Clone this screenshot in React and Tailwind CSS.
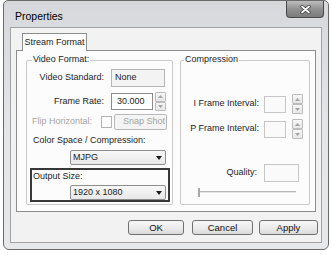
import React from "react";

function TriUp() {
  return (
    <svg width="5" height="3" viewBox="0 0 5 3">
      <path d="M0 3 L2.5 0 L5 3Z" fill="#a3a3a3" />
    </svg>
  );
}
function TriDown() {
  return (
    <svg width="5" height="3" viewBox="0 0 5 3">
      <path d="M0 0 L2.5 3 L5 0Z" fill="#a3a3a3" />
    </svg>
  );
}

function SpinHalf({ up }) {
  return (
    <div className="flex-1 flex items-center justify-center border border-[#bcbcbc] rounded-[1px] bg-gradient-to-b from-[#f7f7f7] to-[#e6e6e6]">
      {up ? <TriUp /> : <TriDown />}
    </div>
  );
}

function Spinner19() {
  return (
    <div className="w-[11px] h-[19px] flex flex-col">
      <SpinHalf up />
      <SpinHalf />
    </div>
  );
}
function Spinner20() {
  return (
    <div className="w-[11px] h-[20px] flex flex-col">
      <SpinHalf up />
      <SpinHalf />
    </div>
  );
}

function Combo({ text }) {
  return (
    <div className="w-[96px] h-[15px] flex items-center border border-[#8e8e8e] rounded-[2px] bg-gradient-to-b from-[#f8f8f8] to-[#e8e8e8] pl-[2px] pr-[3px]">
      <span className="leading-[11px]">{text}</span>
      <svg className="ml-auto" width="6" height="4" viewBox="0 0 6 4">
        <path d="M0 0 L6 0 L3 4Z" fill="#1a1a1a" />
      </svg>
    </div>
  );
}

function Btn({ children, w }) {
  return (
    <div
      className={
        "h-[15px] flex items-center justify-center rounded-[3px] border border-[#707070] bg-gradient-to-b from-[#f7f7f7] via-[#ececec] to-[#dadada] text-[9.5px] leading-[11px] text-[#111] " +
        w
      }
    >
      {children}
    </div>
  );
}

export default function App() {
  return (
    <div className="w-[332px] h-[255px] bg-white overflow-hidden font-['Liberation_Sans',Arial,sans-serif] text-[9px] text-[#1c1c1c]">
      <div className="ml-[3px] w-[326px] h-[250px] flex flex-col border border-[#6a6a6a] rounded-t-[5px] rounded-b-[6px] bg-gradient-to-b from-[#d6d8db] via-[#e3e5e7] to-[#e6e8ea]">
        {/* title bar */}
        <div className="h-[26px] shrink-0 flex items-start">
          <span className="ml-[11px] mt-[9px] text-[10.5px] leading-[12px] text-black">
            Properties
          </span>
          <div className="ml-auto mr-[4px] w-[38px] h-[17px] flex items-center justify-center rounded-b-[4px] border border-t-0 border-[#4a4a4a] bg-gradient-to-b from-[#bdbdbd] via-[#919191] to-[#7b7b7b]">
            <svg width="11" height="9" viewBox="0 0 11 9">
              <path d="M2 1.5 L9 7.5 M9 1.5 L2 7.5" stroke="#3a3a3a" strokeWidth="3.4" strokeLinecap="round" />
              <path d="M2 1.5 L9 7.5 M9 1.5 L2 7.5" stroke="#ffffff" strokeWidth="1.8" strokeLinecap="round" />
            </svg>
          </div>
        </div>

        {/* client area */}
        <div className="ml-[6px] w-[312px] h-[216px] shrink-0 flex flex-col border border-[#a3a3a3] bg-[#f2f2f2]">
          {/* tab */}
          <div className="ml-[11px] mt-[5px] w-[65px] h-[18px] -mb-px relative z-10 flex items-center justify-center border border-b-0 border-[#8d8d8d] bg-[#fcfcfc] leading-[11px] whitespace-nowrap">
            Stream Format
          </div>
          {/* panel */}
          <div className="ml-[5px] w-[300px] h-[162px] shrink-0 flex items-start border border-[#8d8d8d] bg-[#fcfcfc]">
            {/* Video Format */}
            <div className="ml-[9px] mt-[9px] w-[147px] h-[145px] relative flex flex-col border border-[#cacaca] rounded-[2px]">
              <span className="absolute left-[5px] -top-[7px] px-[1px] bg-[#fcfcfc] leading-[11px] whitespace-nowrap">
                Video Format:
              </span>

              <div className="mt-[8px] h-[18px] flex items-center">
                <span className="w-[77px] text-right whitespace-nowrap">Video Standard:</span>
                <div className="ml-[7px] w-[54px] h-[18px] flex items-center pl-[3px] border border-[#b6b6b6] bg-[#f3f3f3]">
                  None
                </div>
              </div>

              <div className="mt-[5px] h-[19px] flex items-center">
                <span className="w-[77px] text-right whitespace-nowrap">Frame Rate:</span>
                <div className="ml-[7px] w-[42px] h-[17px] flex items-center pl-[5px] border border-[#8c8c8c] bg-white">
                  30.000
                </div>
                <div className="ml-[2px]">
                  <Spinner19 />
                </div>
              </div>

              <div className="mt-[3px] h-[16px] flex items-center">
                <span className="w-[65px] text-right whitespace-nowrap text-[#a6a6a6]">
                  Flip Horizontal:
                </span>
                <div className="ml-[9px] w-[11px] h-[12px] border border-[#b3b3b3] bg-white" />
                <div className="ml-[2px] w-[53px] h-[16px] flex items-center pl-[8px] overflow-hidden whitespace-nowrap border border-[#b8b8b8] rounded-[2px] bg-[#f4f4f4] text-[#a3a3a3]">
                  Snap Shot
                </div>
              </div>

              <div className="mt-[4px] ml-[6px] leading-[12px] whitespace-nowrap">
                Color Space / Compression:
              </div>

              <div className="mt-[4px] ml-[43px]">
                <Combo text="MJPG" />
              </div>

              <div className="mt-[3px] ml-[3px] w-[140px] h-[34px] flex flex-col border-2 border-[#383838]">
                <span className="ml-[1px] mt-[1px] leading-[11px] whitespace-nowrap">Output Size:</span>
                <div className="mt-[3px] ml-[38px]">
                  <Combo text="1920 x 1080" />
                </div>
              </div>
            </div>

            {/* Compression */}
            <div className="ml-[7px] mt-[9px] w-[130px] h-[145px] relative flex flex-col border border-[#cacaca] rounded-[2px]">
              <span className="absolute left-[3px] -top-[7px] px-[1px] bg-[#fcfcfc] leading-[11px] whitespace-nowrap">
                Compression
              </span>

              <div className="mt-[33px] h-[20px] flex items-center">
                <span className="w-[78px] text-right whitespace-nowrap">I Frame Interval:</span>
                <div className="ml-[5px] w-[22px] h-[17px] border border-[#c6c6c6] bg-[#fafafa]" />
                <div className="ml-[6px]">
                  <Spinner20 />
                </div>
              </div>

              <div className="mt-[5px] h-[20px] flex items-center">
                <span className="w-[78px] text-right whitespace-nowrap">P Frame Interval:</span>
                <div className="ml-[5px] w-[22px] h-[17px] border border-[#c6c6c6] bg-[#fafafa]" />
                <div className="ml-[6px]">
                  <Spinner20 />
                </div>
              </div>

              <div className="mt-[25px] h-[18px] flex items-center">
                <span className="w-[76px] text-right whitespace-nowrap">Quality:</span>
                <div className="ml-[7px] w-[35px] h-[18px] border border-[#c6c6c6] bg-[#fafafa]" />
              </div>

              <div className="mt-[6px] ml-[17px] w-[98px] h-[9px] flex items-center">
                <div className="w-[2px] h-[9px] border border-[#a8a8a8] bg-[#eeeeee]" />
                <div className="flex-1 h-[3px] border-t border-[#b7b7b7] border-b border-b-white bg-[#e4e4e4]" />
              </div>
            </div>
          </div>

          {/* buttons */}
          <div className="mt-[8px] mr-[3px] flex justify-end">
            <Btn w="w-[56px]">OK</Btn>
            <div className="ml-[8px]">
              <Btn w="w-[61px]">Cancel</Btn>
            </div>
            <div className="ml-[6px]">
              <Btn w="w-[59px]">Apply</Btn>
            </div>
          </div>
        </div>
      </div>
    </div>
  );
}
